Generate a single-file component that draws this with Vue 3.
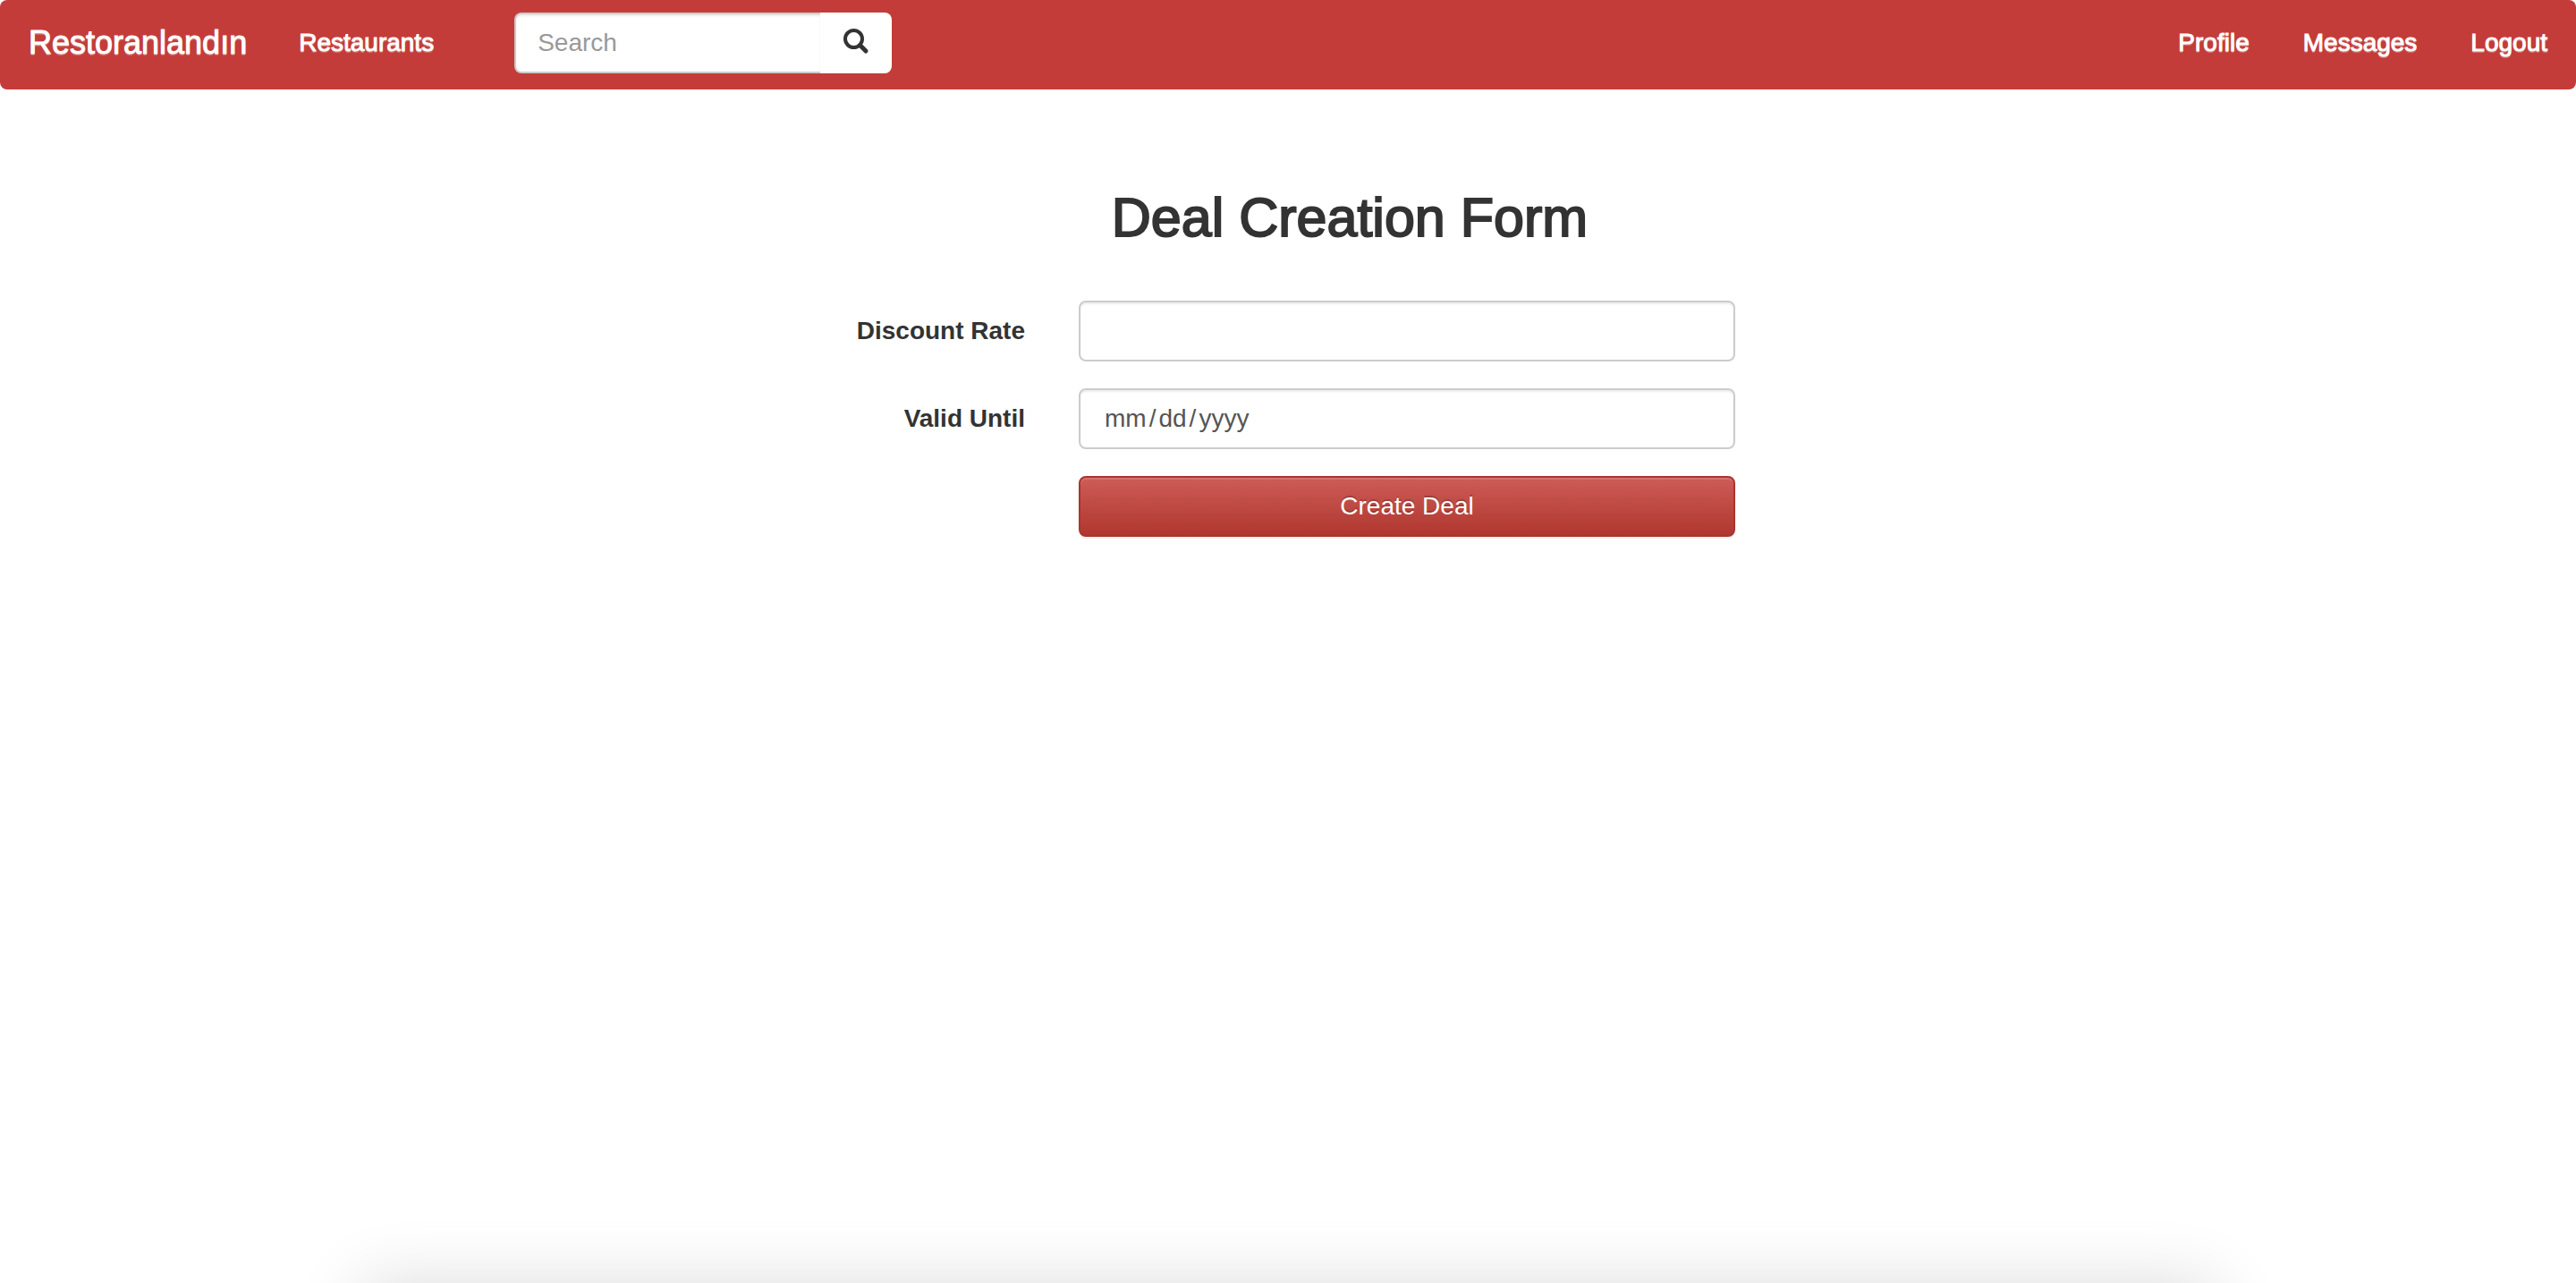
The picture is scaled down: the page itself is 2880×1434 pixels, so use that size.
<script setup>
import { ref } from 'vue'

const search = ref('')
const discount = ref('')
const validUntil = ref('')
const accountLinks = ['Profile', 'Messages', 'Logout']
</script>

<template>
  <nav class="navbar">
    <a class="brand" href="#">Restoranlandın</a>
    <a class="nav-link" href="#">Restaurants</a>
    <form class="search" role="search" @submit.prevent>
      <input v-model="search" class="control search-input" type="text" placeholder="Search" aria-label="Search" />
      <button class="search-button" type="submit" aria-label="Submit search">
        <svg width="32" height="32" viewBox="0 0 32 32" fill="none" stroke="#333" aria-hidden="true">
          <circle cx="13.5" cy="13.5" r="9.5" stroke-width="4" />
          <path d="M20.5 20.5L27 27" stroke-width="5" stroke-linecap="round" />
        </svg>
      </button>
    </form>
    <div class="account">
      <a v-for="item in accountLinks" :key="item" class="nav-link" href="#">{{ item }}</a>
    </div>
  </nav>

  <main class="content">
    <h2 class="title">Deal Creation Form</h2>
    <form class="deal-form" @submit.prevent>
      <label class="label" for="discount">Discount Rate</label>
      <input id="discount" v-model="discount" class="control" type="text" />
      <label class="label" for="valid-until">Valid Until</label>
      <input id="valid-until" v-model="validUntil" class="control date" type="date" />
      <button class="submit" type="submit">Create Deal</button>
    </form>
  </main>

  <div class="dock-shadow" aria-hidden="true"></div>
</template>

<style>
body {
  background: #fff;
  color: #333;
  font-family: "Liberation Sans", Arial, sans-serif;
  font-size: 28px;
  line-height: 40px;
}
</style>

<style scoped>
.navbar,
.navbar *,
.content,
.content * {
  box-sizing: border-box;
}

.navbar {
  display: flex;
  align-items: center;
  min-height: 100px;
  padding: 0 2px;
  border-radius: 8px;
  background: #c43c39;
}

.brand,
.nav-link {
  padding: 28px 30px 32px;
  color: #fff;
  text-decoration: none;
  text-shadow: 0 2px 0 rgba(255, 255, 255, 0.25);
  -webkit-text-stroke: 1px #fff;
}

.brand {
  padding-right: 28px;
  font-size: 36px;
}

.account {
  display: flex;
  margin-left: auto;
}

.search {
  display: flex;
  margin: 0 0 4px 60px;
}

.control {
  width: 100%;
  height: 68px;
  margin: 0;
  padding: 12px 24px;
  border: 2px solid #ccc;
  border-radius: 8px;
  outline: 0;
  background: #fff;
  box-shadow: inset 0 2px 2px rgba(0, 0, 0, 0.075);
  color: #555;
  font: inherit;
}

.control::placeholder {
  color: #999;
  opacity: 1;
}

.search-input {
  width: 342px;
  border-right: 0;
  border-radius: 8px 0 0 8px;
}

.search-button {
  display: flex;
  align-items: center;
  justify-content: center;
  width: 80px;
  padding: 0 0 4px;
  border: 0;
  border-radius: 0 8px 8px 0;
  background: #fff;
}

.content {
  max-width: 1060px;
  margin: 0 auto;
  padding: 110px 0 60px;
}

.title {
  margin: 0 0 60px;
  padding-left: 13%;
  font-size: 61px;
  font-weight: 400;
  line-height: 66px;
  text-align: center;
  -webkit-text-stroke: 2px #333;
}

.deal-form {
  display: grid;
  grid-template-columns: 236px 1fr;
  gap: 30px 60px;
  align-items: center;
  padding-right: 30px;
}

.label {
  font-weight: 700;
  text-align: right;
}

.date::-webkit-calendar-picker-indicator {
  display: none;
}

.date::-webkit-datetime-edit-month-field,
.date::-webkit-datetime-edit-day-field,
.date::-webkit-datetime-edit-year-field {
  padding: 0 3px;
}

.submit {
  grid-column: 2;
  height: 68px;
  padding: 0 24px;
  border: 2px solid #a93430;
  border-radius: 8px;
  background: linear-gradient(#cd5c57, #b0372f);
  box-shadow: inset 0 2px 0 rgba(255, 255, 255, 0.15), 0 2px 2px rgba(0, 0, 0, 0.075);
  color: #fff;
  font: inherit;
  text-shadow: 0 -2px 0 rgba(0, 0, 0, 0.2);
}

.dock-shadow {
  position: fixed;
  right: 14%;
  bottom: -100px;
  left: 14%;
  height: 100px;
  box-shadow: 0 0 76px rgba(0, 0, 0, 0.14);
}
</style>
